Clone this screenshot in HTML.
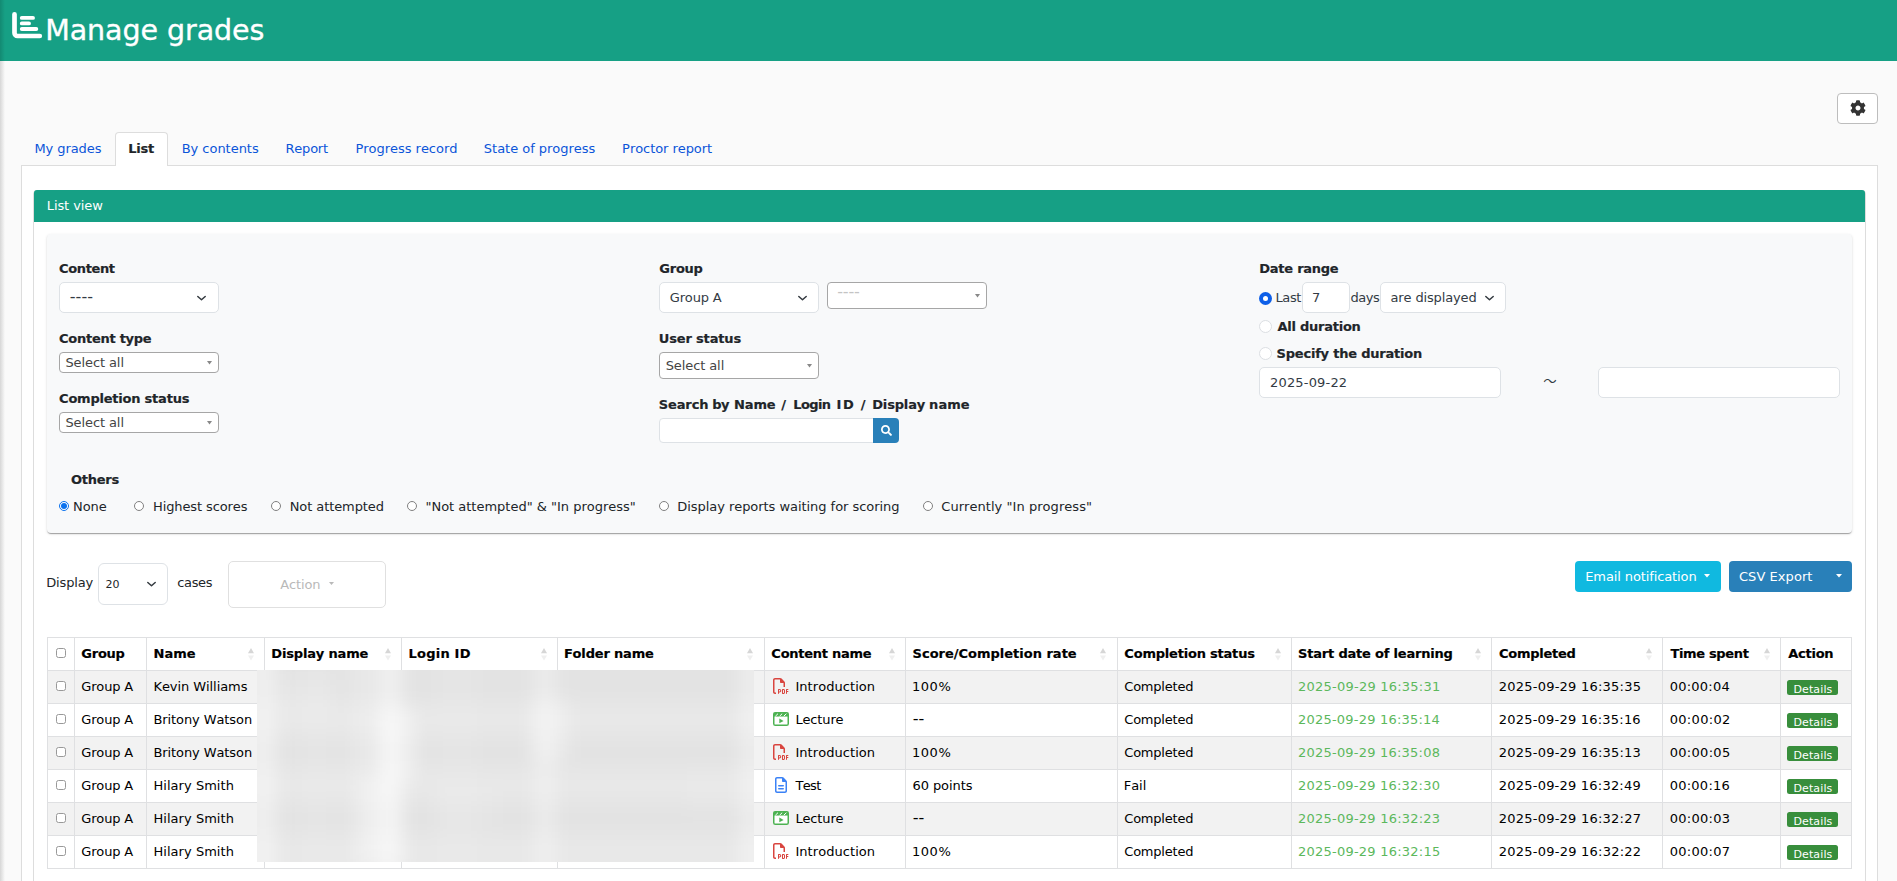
<!DOCTYPE html><html lang="en"><head><meta charset="utf-8"><title>Manage grades</title><style>
html,body{margin:0;padding:0}
body{width:1897px;height:881px;overflow:hidden;background:#fafafa;font-family:"DejaVu Sans","Liberation Sans",sans-serif;font-size:13px;color:#212529;position:relative}
.t{position:absolute;white-space:pre;line-height:normal;font-kerning:none}
.b{position:absolute;box-sizing:border-box}
svg{position:absolute;display:block;overflow:visible}
</style></head><body>
<header>
<div class="b" style="left:0px;top:0px;width:1897px;height:61px;background:#16a085;"></div>
<svg style="left:0;top:0" width="60" height="60" viewBox="0 0 60 60"><path d="M14.5 14.3V33a3 3 0 0 0 3 3H39.800" fill="none" stroke="#fff" stroke-width="4.700" stroke-linecap="round" stroke-linejoin="round"/><path d="M21.800 17.900H33M21.800 23.400H29M21.800 29H36.300" fill="none" stroke="#fff" stroke-width="3.900" stroke-linecap="round"/></svg>
<span class="t" style="left:45.2px;top:14.0px;font-size:28.5px;font-weight:400;color:#fff;letter-spacing:-0.069px;-webkit-text-stroke:0.35px #fff;">Manage grades</span>
</header>
<main>
<div class="b" style="left:1837px;top:93px;width:41px;height:31px;background:#fff;border:1px solid #bdbdbd;border-radius:4px;"></div>
<svg style="left:1849.5px;top:100px" width="16" height="16" viewBox="0 0 512 512"><path fill="#333" d="M487.4 315.7l-42.600-24.600c4.300-23.200 4.300-47 0-70.200l42.600-24.600c4.900-2.800 7.100-8.600 5.500-14-11.100-35.600-30-67.800-54.700-94.600-3.800-4.100-10-5.100-14.800-2.300L380.800 110c-17.900-15.400-38.500-27.300-60.800-35.100V25.800c0-5.600-3.900-10.500-9.400-11.700-36.700-8.200-74.300-7.800-109.200 0-5.500 1.200-9.400 6.100-9.400 11.700V75c-22.200 7.900-42.800 19.800-60.800 35.100L88.700 85.500c-4.900-2.800-11-1.900-14.800 2.300-24.700 26.700-43.600 58.900-54.700 94.600-1.700 5.400.6 11.200 5.500 14L67.300 221c-4.300 23.200-4.300 47 0 70.200l-42.600 24.600c-4.900 2.800-7.100 8.600-5.500 14 11.100 35.600 30 67.800 54.700 94.600 3.800 4.100 10 5.100 14.800 2.300l42.600-24.600c17.900 15.400 38.500 27.300 60.800 35.100v49.200c0 5.600 3.900 10.500 9.400 11.700 36.700 8.200 74.300 7.800 109.200 0 5.500-1.200 9.400-6.100 9.400-11.700v-49.200c22.200-7.900 42.800-19.800 60.800-35.100l42.600 24.600c4.900 2.800 11 1.900 14.800-2.300 24.700-26.700 43.600-58.900 54.700-94.600 1.500-5.500-.7-11.300-5.600-14.100zM256 336c-44.100 0-80-35.900-80-80s35.900-80 80-80 80 35.900 80 80-35.900 80-80 80z"/></svg>
<nav>
<div class="b" style="left:21px;top:165px;width:1857px;height:760px;background:#fff;border:1px solid #ddd;"></div>
<div class="b" style="left:115px;top:132px;width:53px;height:34px;background:#fff;border:1px solid #ddd;border-bottom:none;border-radius:4px 4px 0 0;"></div>
<span class="t" style="left:34.47px;top:141.25px;font-size:13px;font-weight:400;color:#0b55d9;letter-spacing:-0.083px;">My grades</span>
<span class="t" style="left:128.31px;top:141.25px;font-size:13px;font-weight:700;color:#212529;letter-spacing:-0.217px;-webkit-text-stroke:0.18px #212529;">List</span>
<span class="t" style="left:181.72px;top:141.25px;font-size:13px;font-weight:400;color:#0b55d9;letter-spacing:-0.033px;">By contents</span>
<span class="t" style="left:285.47px;top:141.25px;font-size:13px;font-weight:400;color:#0b55d9;letter-spacing:-0.208px;">Report</span>
<span class="t" style="left:355.47px;top:141.25px;font-size:13px;font-weight:400;color:#0b55d9;letter-spacing:-0.032px;">Progress record</span>
<span class="t" style="left:483.84px;top:141.25px;font-size:13px;font-weight:400;color:#0b55d9;letter-spacing:-0.025px;">State of progress</span>
<span class="t" style="left:622.12px;top:141.25px;font-size:13px;font-weight:400;color:#0b55d9;letter-spacing:-0.063px;">Proctor report</span>
</nav>
<section>
<div class="b" style="left:33px;top:190px;width:1833px;height:735px;border:1px solid #ddd;border-radius:4px 4px 0 0;"></div>
<div class="b" style="left:34px;top:190px;width:1831px;height:32px;background:#16a085;border-radius:3px 3px 0 0;"></div>
<span class="t" style="left:46.72px;top:198px;font-size:13px;font-weight:400;color:#fff;letter-spacing:-0.084px;">List view</span>
<form>
<div class="b" style="left:47px;top:234px;width:1805px;height:299px;background:#f8f9fa;border-radius:4px;box-shadow:0 2px 1px -1px rgba(0,0,0,.2),0 1px 1px 0 rgba(0,0,0,.14),0 1px 3px 0 rgba(0,0,0,.12);"></div>
<span class="t" style="left:59.1px;top:261px;font-size:13px;font-weight:700;color:#212529;letter-spacing:-0.372px;-webkit-text-stroke:0.18px #212529;">Content</span>
<div class="b" style="left:59px;top:282px;width:160px;height:31px;background:#fff;border:1px solid #dee2e6;border-radius:5px;"></div>
<span class="t" style="left:69.72px;top:286.5px;font-size:16px;font-weight:400;color:#333b44;letter-spacing:0.09px;">----</span>
<svg style="left:196.9px;top:295.75px" width="9" height="4.5" viewBox="0 0 9 4.5"><path d="M0.8 0.5 L4.5 3.8 L8.2 0.5" fill="none" stroke="#343a40" stroke-width="1.5" stroke-linecap="round" stroke-linejoin="round"/></svg>
<span class="t" style="left:59.1px;top:331px;font-size:13px;font-weight:700;color:#212529;letter-spacing:-0.272px;-webkit-text-stroke:0.18px #212529;">Content type</span>
<div class="b" style="left:59px;top:352px;width:160px;height:21px;background:#fff;border:1px solid #a6a6a6;border-radius:4px;"></div>
<span class="t" style="left:65.39px;top:354.75px;font-size:13px;font-weight:400;color:#444;letter-spacing:-0.089px;">Select all</span>
<svg style="left:207.0px;top:360.75px" width="5" height="3.5" viewBox="0 0 5 3.5"><path d="M0 0H5L2.5 3.5z" fill="#888"/></svg>
<span class="t" style="left:59.1px;top:391px;font-size:13px;font-weight:700;color:#212529;letter-spacing:-0.225px;-webkit-text-stroke:0.18px #212529;">Completion status</span>
<div class="b" style="left:59px;top:412px;width:160px;height:21px;background:#fff;border:1px solid #a6a6a6;border-radius:4px;"></div>
<span class="t" style="left:65.39px;top:414.75px;font-size:13px;font-weight:400;color:#444;letter-spacing:-0.089px;">Select all</span>
<svg style="left:207.0px;top:420.75px" width="5" height="3.5" viewBox="0 0 5 3.5"><path d="M0 0H5L2.5 3.5z" fill="#888"/></svg>
<span class="t" style="left:659.35px;top:261px;font-size:13px;font-weight:700;color:#212529;letter-spacing:-0.26px;-webkit-text-stroke:0.18px #212529;">Group</span>
<div class="b" style="left:659px;top:282px;width:160px;height:31px;background:#fff;border:1px solid #dee2e6;border-radius:5px;"></div>
<span class="t" style="left:669.77px;top:290px;font-size:13px;font-weight:400;color:#333b44;letter-spacing:-0.167px;">Group A</span>
<svg style="left:797.9px;top:295.75px" width="9" height="4.5" viewBox="0 0 9 4.5"><path d="M0.8 0.5 L4.5 3.8 L8.2 0.5" fill="none" stroke="#343a40" stroke-width="1.5" stroke-linecap="round" stroke-linejoin="round"/></svg>
<div class="b" style="left:827px;top:282px;width:160px;height:27px;background:#fff;border:1px solid #a6a6a6;border-radius:4px;"></div>
<span class="t" style="left:837.22px;top:281.9px;font-size:16px;font-weight:400;color:#c4c4c4;letter-spacing:-0.16px;">----</span>
<svg style="left:975.0px;top:293.75px" width="5" height="3.5" viewBox="0 0 5 3.5"><path d="M0 0H5L2.5 3.5z" fill="#888"/></svg>
<span class="t" style="left:658.81px;top:331px;font-size:13px;font-weight:700;color:#212529;letter-spacing:-0.162px;-webkit-text-stroke:0.18px #212529;">User status</span>
<div class="b" style="left:659px;top:352px;width:160px;height:27px;background:#fff;border:1px solid #a6a6a6;border-radius:4px;"></div>
<span class="t" style="left:665.64px;top:358px;font-size:13px;font-weight:400;color:#444;letter-spacing:-0.089px;">Select all</span>
<svg style="left:807.0px;top:363.75px" width="5" height="3.5" viewBox="0 0 5 3.5"><path d="M0 0H5L2.5 3.5z" fill="#888"/></svg>
<label>
<span class="t" style="left:658.77px;top:397px;font-size:13px;font-weight:700;color:#212529;letter-spacing:-0.115px;-webkit-text-stroke:0.18px #212529;">Search</span>
<span class="t" style="left:712.36px;top:397px;font-size:13px;font-weight:700;color:#212529;letter-spacing:-0.653px;-webkit-text-stroke:0.18px #212529;">by</span>
<span class="t" style="left:734.01px;top:397px;font-size:13px;font-weight:700;color:#212529;letter-spacing:-0.131px;-webkit-text-stroke:0.18px #212529;">Name</span>
<span class="t" style="left:781.3px;top:397px;font-size:13px;font-weight:700;color:#212529;-webkit-text-stroke:0.18px #212529;">/</span>
<span class="t" style="left:793.26px;top:397px;font-size:13px;font-weight:700;color:#212529;letter-spacing:-0.618px;-webkit-text-stroke:0.18px #212529;">Login</span>
<span class="t" style="left:836.51px;top:397px;font-size:13px;font-weight:700;color:#212529;letter-spacing:1.6px;-webkit-text-stroke:0.18px #212529;">ID</span>
<span class="t" style="left:860.8px;top:397px;font-size:13px;font-weight:700;color:#212529;-webkit-text-stroke:0.18px #212529;">/</span>
<span class="t" style="left:872.26px;top:397px;font-size:13px;font-weight:700;color:#212529;letter-spacing:-0.169px;-webkit-text-stroke:0.18px #212529;">Display</span>
<span class="t" style="left:929.11px;top:397px;font-size:13px;font-weight:700;color:#212529;letter-spacing:0.043px;-webkit-text-stroke:0.18px #212529;">name</span>
</label>
<div class="b" style="left:659px;top:418px;width:215px;height:25px;background:#fff;border:1px solid #dee2e6;border-radius:4px 0 0 4px;"></div>
<div class="b" style="left:873px;top:418px;width:26px;height:25px;background:#2980b9;border-radius:0 4px 4px 0;"></div>
<svg style="left:880.5px;top:425px" width="11" height="11" viewBox="0 0 512 512"><path fill="#fff" d="M505 442.7L405.300 343c-4.500-4.500-10.600-7-17-7H372c27.600-35.300 44-79.700 44-128C416 93.100 322.900 0 208 0S0 93.100 0 208s93.100 208 208 208c48.300 0 92.700-16.400 128-44v16.300c0 6.400 2.500 12.500 7 17l99.700 99.700c9.400 9.400 24.600 9.400 33.900 0l28.300-28.300c9.400-9.400 9.400-24.600.1-34zM208 336c-70.700 0-128-57.200-128-128 0-70.700 57.200-128 128-128 70.700 0 128 57.200 128 128 0 70.700-57.200 128-128 128z"/></svg>
<span class="t" style="left:1259.31px;top:261px;font-size:13px;font-weight:700;color:#212529;letter-spacing:-0.257px;-webkit-text-stroke:0.18px #212529;">Date range</span>
<div class="b" style="left:1259.0px;top:292.0px;width:13px;height:13px;border-radius:50%;background:#0d5fe8;"></div>
<div class="b" style="left:1263.0px;top:296.0px;width:5px;height:5px;border-radius:50%;background:#fff;"></div>
<span class="t" style="left:1275.47px;top:290px;font-size:13px;font-weight:400;color:#333b44;letter-spacing:-0.397px;">Last</span>
<div class="b" style="left:1302px;top:282px;width:48px;height:31px;background:#fff;border:1px solid #dee2e6;border-radius:5px;"></div>
<span class="t" style="left:1311.93px;top:290px;font-size:13px;font-weight:400;color:#333b44;letter-spacing:0px;">7</span>
<span class="t" style="left:1350.53px;top:290px;font-size:13px;font-weight:400;color:#333b44;letter-spacing:-0.511px;">days</span>
<div class="b" style="left:1380px;top:282px;width:126px;height:31px;background:#fff;border:1px solid #dee2e6;border-radius:5px;"></div>
<span class="t" style="left:1390.47px;top:290px;font-size:13px;font-weight:400;color:#333b44;letter-spacing:-0.133px;">are displayed</span>
<svg style="left:1485.0px;top:295.75px" width="9" height="4.5" viewBox="0 0 9 4.5"><path d="M0.8 0.5 L4.5 3.8 L8.2 0.5" fill="none" stroke="#343a40" stroke-width="1.5" stroke-linecap="round" stroke-linejoin="round"/></svg>
<div class="b" style="left:1259.0px;top:320.0px;width:13px;height:13px;border-radius:50%;background:#fff;border:1px solid #dcdfe3;"></div>
<span class="t" style="left:1277.44px;top:319.25px;font-size:13px;font-weight:700;color:#212529;letter-spacing:-0.247px;-webkit-text-stroke:0.18px #212529;">All duration</span>
<div class="b" style="left:1259.0px;top:347.0px;width:13px;height:13px;border-radius:50%;background:#fff;border:1px solid #dcdfe3;"></div>
<span class="t" style="left:1276.57px;top:346.25px;font-size:13px;font-weight:700;color:#212529;letter-spacing:-0.209px;-webkit-text-stroke:0.18px #212529;">Specify the duration</span>
<div class="b" style="left:1259px;top:367px;width:242px;height:31px;background:#fff;border:1px solid #dee2e6;border-radius:5px;"></div>
<span class="t" style="left:1270.05px;top:375px;font-size:13px;font-weight:400;color:#333b44;letter-spacing:0.167px;">2025-09-22</span>
<span class="t" style="left:1543.2px;top:369.5px;font-size:13.5px;font-weight:400;color:#333b44;font-family:'Noto Sans CJK JP','DejaVu Sans',sans-serif;">～</span>
<div class="b" style="left:1598px;top:367px;width:242px;height:31px;background:#fff;border:1px solid #dee2e6;border-radius:5px;"></div>
<span class="t" style="left:71.1px;top:472.25px;font-size:13px;font-weight:700;color:#212529;letter-spacing:-0.285px;-webkit-text-stroke:0.18px #212529;">Others</span>
<div class="b" style="left:58.75px;top:500.8px;width:10px;height:10px;border-radius:50%;background:#fff;border:1.1px solid #0b72ee;"></div>
<div class="b" style="left:60.75px;top:502.8px;width:6px;height:6px;border-radius:50%;background:#0b72ee;"></div>
<span class="t" style="left:72.97px;top:499.25px;font-size:13px;font-weight:400;color:#212529;letter-spacing:-0.049px;">None</span>
<div class="b" style="left:134.25px;top:500.8px;width:10px;height:10px;border-radius:50%;background:#fff;border:1px solid #808080;"></div>
<span class="t" style="left:152.97px;top:499.25px;font-size:13px;font-weight:400;color:#212529;letter-spacing:-0.108px;">Highest scores</span>
<div class="b" style="left:270.75px;top:500.8px;width:10px;height:10px;border-radius:50%;background:#fff;border:1px solid #808080;"></div>
<span class="t" style="left:289.72px;top:499.25px;font-size:13px;font-weight:400;color:#212529;letter-spacing:-0.089px;">Not attempted</span>
<div class="b" style="left:407px;top:500.8px;width:10px;height:10px;border-radius:50%;background:#fff;border:1px solid #808080;"></div>
<span class="t" style="left:425.45px;top:499.25px;font-size:13px;font-weight:400;color:#212529;letter-spacing:-0.008px;">&quot;Not attempted&quot; &amp; &quot;In progress&quot;</span>
<div class="b" style="left:658.8px;top:500.8px;width:10px;height:10px;border-radius:50%;background:#fff;border:1px solid #808080;"></div>
<span class="t" style="left:677.22px;top:499.25px;font-size:13px;font-weight:400;color:#212529;letter-spacing:-0.046px;">Display reports waiting for scoring</span>
<div class="b" style="left:922.7px;top:500.8px;width:10px;height:10px;border-radius:50%;background:#fff;border:1px solid #808080;"></div>
<span class="t" style="left:941.27px;top:499.25px;font-size:13px;font-weight:400;color:#212529;letter-spacing:0.048px;">Currently &quot;In progress&quot;</span>
</form>
<div>
<span class="t" style="left:46.22px;top:574.75px;font-size:13px;font-weight:400;color:#212529;letter-spacing:-0.159px;">Display</span>
<div class="b" style="left:98px;top:563px;width:70px;height:42px;background:#fff;border:1px solid #dee2e6;border-radius:6px;"></div>
<span class="t" style="left:105.44px;top:578px;font-size:11px;font-weight:400;color:#212529;letter-spacing:0.089px;">20</span>
<svg style="left:147.0px;top:581.75px" width="9" height="4.5" viewBox="0 0 9 4.5"><path d="M0.8 0.5 L4.5 3.8 L8.2 0.5" fill="none" stroke="#343a40" stroke-width="1.5" stroke-linecap="round" stroke-linejoin="round"/></svg>
<span class="t" style="left:177.28px;top:574.75px;font-size:13px;font-weight:400;color:#212529;letter-spacing:-0.376px;">cases</span>
<div class="b" style="left:228px;top:561px;width:158px;height:47px;background:#fff;border:1px solid #e0e0e0;border-radius:5px;"></div>
<span class="t" style="left:280.2px;top:577px;font-size:13px;font-weight:400;color:#b9b9b9;letter-spacing:-0.127px;">Action</span>
<svg style="left:328.5px;top:581.8px" width="5" height="3" viewBox="0 0 5 3"><path d="M0 0H5L2.5 3z" fill="#b9b9b9"/></svg>
<div class="b" style="left:1575px;top:561px;width:146px;height:31px;background:#10b9e0;border-radius:4px;"></div>
<span class="t" style="left:1585.22px;top:569.2px;font-size:13px;font-weight:400;color:#fff;letter-spacing:-0.107px;">Email notification</span>
<svg style="left:1704.0px;top:573.75px" width="6" height="3.5" viewBox="0 0 6 3.5"><path d="M0 0H6L3.0 3.5z" fill="#fff"/></svg>
<div class="b" style="left:1729px;top:561px;width:123px;height:31px;background:#2980b9;border-radius:4px;"></div>
<span class="t" style="left:1738.97px;top:569.2px;font-size:13px;font-weight:400;color:#fff;letter-spacing:0.059px;">CSV Export</span>
<svg style="left:1836.0px;top:573.75px" width="6" height="3.5" viewBox="0 0 6 3.5"><path d="M0 0H6L3.0 3.5z" fill="#fff"/></svg>
</div>
<div>
<div class="b" style="left:47px;top:670px;width:1805px;height:33px;background:#f2f2f2;"></div>
<div class="b" style="left:47px;top:703px;width:1805px;height:33px;background:#fff;"></div>
<div class="b" style="left:47px;top:736px;width:1805px;height:33px;background:#f2f2f2;"></div>
<div class="b" style="left:47px;top:769px;width:1805px;height:33px;background:#fff;"></div>
<div class="b" style="left:47px;top:802px;width:1805px;height:33px;background:#f2f2f2;"></div>
<div class="b" style="left:47px;top:835px;width:1805px;height:33px;background:#fff;"></div>
<div class="b" style="left:47px;top:637px;width:1805px;height:1px;background:#dfe0e2;"></div>
<div class="b" style="left:47px;top:670px;width:1805px;height:1px;background:#dfe0e2;"></div>
<div class="b" style="left:47px;top:703px;width:1805px;height:1px;background:#dfe0e2;"></div>
<div class="b" style="left:47px;top:736px;width:1805px;height:1px;background:#dfe0e2;"></div>
<div class="b" style="left:47px;top:769px;width:1805px;height:1px;background:#dfe0e2;"></div>
<div class="b" style="left:47px;top:802px;width:1805px;height:1px;background:#dfe0e2;"></div>
<div class="b" style="left:47px;top:835px;width:1805px;height:1px;background:#dfe0e2;"></div>
<div class="b" style="left:47px;top:868px;width:1805px;height:1px;background:#dfe0e2;"></div>
<div class="b" style="left:47px;top:637px;width:1px;height:232px;background:#dfe0e2;"></div>
<div class="b" style="left:74px;top:637px;width:1px;height:232px;background:#dfe0e2;"></div>
<div class="b" style="left:146px;top:637px;width:1px;height:232px;background:#dfe0e2;"></div>
<div class="b" style="left:264px;top:637px;width:1px;height:232px;background:#dfe0e2;"></div>
<div class="b" style="left:401px;top:637px;width:1px;height:232px;background:#dfe0e2;"></div>
<div class="b" style="left:557px;top:637px;width:1px;height:232px;background:#dfe0e2;"></div>
<div class="b" style="left:764px;top:637px;width:1px;height:232px;background:#dfe0e2;"></div>
<div class="b" style="left:905px;top:637px;width:1px;height:232px;background:#dfe0e2;"></div>
<div class="b" style="left:1117px;top:637px;width:1px;height:232px;background:#dfe0e2;"></div>
<div class="b" style="left:1291px;top:637px;width:1px;height:232px;background:#dfe0e2;"></div>
<div class="b" style="left:1491px;top:637px;width:1px;height:232px;background:#dfe0e2;"></div>
<div class="b" style="left:1662px;top:637px;width:1px;height:232px;background:#dfe0e2;"></div>
<div class="b" style="left:1780px;top:637px;width:1px;height:232px;background:#dfe0e2;"></div>
<div class="b" style="left:1851px;top:637px;width:1px;height:232px;background:#dfe0e2;"></div>
<div class="b" style="left:55.75px;top:648px;width:10px;height:10px;background:#fff;border:1px solid #999;border-radius:2.5px;"></div>
<span class="t" style="left:81.35px;top:646px;font-size:13px;font-weight:700;color:#000;letter-spacing:-0.26px;-webkit-text-stroke:0.18px #000;">Group</span>
<span class="t" style="left:153.56px;top:646px;font-size:13px;font-weight:700;color:#000;letter-spacing:0.036px;-webkit-text-stroke:0.18px #000;">Name</span>
<svg style="left:247.75px;top:648px" width="6" height="12.6" viewBox="0 0 6 12.6"><path d="M3 0L6 5.200H0z" fill="#d6d6d6"/><path d="M3 12.600L6 7.400H0z" fill="#efefef"/></svg>
<span class="t" style="left:271.31px;top:646px;font-size:13px;font-weight:700;color:#000;letter-spacing:-0.162px;-webkit-text-stroke:0.18px #000;">Display name</span>
<svg style="left:385px;top:648px" width="6" height="12.6" viewBox="0 0 6 12.6"><path d="M3 0L6 5.200H0z" fill="#d6d6d6"/><path d="M3 12.600L6 7.400H0z" fill="#efefef"/></svg>
<span class="t" style="left:408.56px;top:646px;font-size:13px;font-weight:700;color:#000;letter-spacing:0.22px;-webkit-text-stroke:0.18px #000;">Login ID</span>
<svg style="left:541px;top:648px" width="6" height="12.6" viewBox="0 0 6 12.6"><path d="M3 0L6 5.200H0z" fill="#d6d6d6"/><path d="M3 12.600L6 7.400H0z" fill="#efefef"/></svg>
<span class="t" style="left:563.91px;top:646px;font-size:13px;font-weight:700;color:#000;letter-spacing:-0.18px;-webkit-text-stroke:0.18px #000;">Folder name</span>
<svg style="left:747.25px;top:648px" width="6" height="12.6" viewBox="0 0 6 12.6"><path d="M3 0L6 5.200H0z" fill="#d6d6d6"/><path d="M3 12.600L6 7.400H0z" fill="#efefef"/></svg>
<span class="t" style="left:771.35px;top:646px;font-size:13px;font-weight:700;color:#000;letter-spacing:-0.256px;-webkit-text-stroke:0.18px #000;">Content name</span>
<svg style="left:889px;top:648px" width="6" height="12.6" viewBox="0 0 6 12.6"><path d="M3 0L6 5.200H0z" fill="#d6d6d6"/><path d="M3 12.600L6 7.400H0z" fill="#efefef"/></svg>
<span class="t" style="left:912.57px;top:646px;font-size:13px;font-weight:700;color:#000;letter-spacing:-0.003px;-webkit-text-stroke:0.18px #000;">Score/Completion rate</span>
<svg style="left:1100px;top:648px" width="6" height="12.6" viewBox="0 0 6 12.6"><path d="M3 0L6 5.200H0z" fill="#d6d6d6"/><path d="M3 12.600L6 7.400H0z" fill="#efefef"/></svg>
<span class="t" style="left:1124.35px;top:646px;font-size:13px;font-weight:700;color:#000;letter-spacing:-0.209px;-webkit-text-stroke:0.18px #000;">Completion status</span>
<svg style="left:1274.5px;top:648px" width="6" height="12.6" viewBox="0 0 6 12.6"><path d="M3 0L6 5.200H0z" fill="#d6d6d6"/><path d="M3 12.600L6 7.400H0z" fill="#efefef"/></svg>
<span class="t" style="left:1298.07px;top:646px;font-size:13px;font-weight:700;color:#000;letter-spacing:-0.198px;-webkit-text-stroke:0.18px #000;">Start date of learning</span>
<svg style="left:1475px;top:648px" width="6" height="12.6" viewBox="0 0 6 12.6"><path d="M3 0L6 5.200H0z" fill="#d6d6d6"/><path d="M3 12.600L6 7.400H0z" fill="#efefef"/></svg>
<span class="t" style="left:1499.1px;top:646px;font-size:13px;font-weight:700;color:#000;letter-spacing:-0.268px;-webkit-text-stroke:0.18px #000;">Completed</span>
<svg style="left:1646px;top:648px" width="6" height="12.6" viewBox="0 0 6 12.6"><path d="M3 0L6 5.200H0z" fill="#d6d6d6"/><path d="M3 12.600L6 7.400H0z" fill="#efefef"/></svg>
<span class="t" style="left:1670.44px;top:646px;font-size:13px;font-weight:700;color:#000;letter-spacing:-0.348px;-webkit-text-stroke:0.18px #000;">Time spent</span>
<svg style="left:1764px;top:648px" width="6" height="12.6" viewBox="0 0 6 12.6"><path d="M3 0L6 5.200H0z" fill="#d6d6d6"/><path d="M3 12.600L6 7.400H0z" fill="#efefef"/></svg>
<span class="t" style="left:1788.24px;top:646px;font-size:13px;font-weight:700;color:#000;letter-spacing:-0.249px;-webkit-text-stroke:0.18px #000;">Action</span>
<div class="b" style="left:55.75px;top:681px;width:10px;height:10px;background:#fff;border:1px solid #999;border-radius:2.5px;"></div>
<span class="t" style="left:81.27px;top:679px;font-size:13px;font-weight:400;color:#000;letter-spacing:-0.167px;">Group A</span>
<span class="t" style="left:153.47px;top:679px;font-size:13px;font-weight:400;color:#000;letter-spacing:-0.073px;">Kevin Williams</span>
<svg style="left:772.75px;top:678px" width="16" height="16" viewBox="0 0 512 512"><path fill="#d9453f" d="M64 464H96v48H64c-35.300 0-64-28.700-64-64V64C0 28.700 28.700 0 64 0H229.500c17 0 33.300 6.700 45.300 18.700l90.500 90.500c12 12 18.700 28.300 18.700 45.300V288H336V160H256c-17.700 0-32-14.300-32-32V48H64c-8.800 0-16 7.200-16 16V448c0 8.800 7.200 16 16 16zM176 352h32c30.900 0 56 25.100 56 56s-25.100 56-56 56H192v32c0 8.800-7.200 16-16 16s-16-7.200-16-16V448 368c0-8.800 7.200-16 16-16zm32 80c13.300 0 24-10.700 24-24s-10.700-24-24-24H192v48h16zm96-80h32c26.500 0 48 21.500 48 48v64c0 26.500-21.500 48-48 48H304c-8.800 0-16-7.200-16-16V368c0-8.800 7.200-16 16-16zm32 128c8.800 0 16-7.200 16-16V400c0-8.800-7.200-16-16-16H320v96h16zm80-112c0-8.800 7.200-16 16-16h48c8.800 0 16 7.200 16 16s-7.200 16-16 16H448v32h32c8.800 0 16 7.200 16 16s-7.200 16-16 16H448v48c0 8.800-7.200 16-16 16s-16-7.200-16-16V432 368z"/></svg>
<span class="t" style="left:795.42px;top:679px;font-size:13px;font-weight:400;color:#000;letter-spacing:0.061px;">Introduction</span>
<span class="t" style="left:912.07px;top:679px;font-size:13px;font-weight:400;color:#000;letter-spacing:0.51px;">100%</span>
<span class="t" style="left:1124.27px;top:679px;font-size:13px;font-weight:400;color:#000;letter-spacing:-0.212px;">Completed</span>
<span class="t" style="left:1298.05px;top:679px;font-size:13px;font-weight:400;color:#5cb85c;letter-spacing:0.23px;">2025-09-29 16:35:31</span>
<span class="t" style="left:1498.8px;top:679px;font-size:13px;font-weight:400;color:#000;letter-spacing:0.226px;">2025-09-29 16:35:35</span>
<span class="t" style="left:1669.64px;top:679px;font-size:13px;font-weight:400;color:#000;letter-spacing:0.25px;">00:00:04</span>
<div class="b" style="left:1787px;top:680px;width:51px;height:15px;background:#388e3c;border-radius:2.5px;"></div>
<span class="t" style="left:1793.42px;top:682.5px;font-size:11px;font-weight:400;color:#fff;letter-spacing:0.13px;">Details</span>
<div class="b" style="left:55.75px;top:714px;width:10px;height:10px;background:#fff;border:1px solid #999;border-radius:2.5px;"></div>
<span class="t" style="left:81.27px;top:712px;font-size:13px;font-weight:400;color:#000;letter-spacing:-0.167px;">Group A</span>
<span class="t" style="left:153.47px;top:712px;font-size:13px;font-weight:400;color:#000;letter-spacing:-0.092px;">Britony Watson</span>
<svg style="left:772.75px;top:712px" width="16" height="14" viewBox="0 0 16 14"><rect x="0.75" y="0.75" width="14.5" height="12.5" rx="1.6" fill="#fff" stroke="#4db252" stroke-width="1.5"/><rect x="0.75" y="0.75" width="14.500" height="3.800" fill="#4db252"/><path d="M2.400 4.200L5 1.700M6.600 4.200L9.200 1.700M10.800 4.200L13.400 1.700" stroke="#fff" stroke-width="1"/><path d="M6.300 6.600L10.600 8.900L6.300 11.200z" fill="#4db252"/></svg>
<span class="t" style="left:795.42px;top:712px;font-size:13px;font-weight:400;color:#000;letter-spacing:-0.15px;">Lecture</span>
<span class="t" style="left:912.72px;top:708.6px;font-size:16px;font-weight:400;color:#000;letter-spacing:0.066px;">--</span>
<span class="t" style="left:1124.27px;top:712px;font-size:13px;font-weight:400;color:#000;letter-spacing:-0.212px;">Completed</span>
<span class="t" style="left:1298.05px;top:712px;font-size:13px;font-weight:400;color:#5cb85c;letter-spacing:0.204px;">2025-09-29 16:35:14</span>
<span class="t" style="left:1498.8px;top:712px;font-size:13px;font-weight:400;color:#000;letter-spacing:0.209px;">2025-09-29 16:35:16</span>
<span class="t" style="left:1669.64px;top:712px;font-size:13px;font-weight:400;color:#000;letter-spacing:0.332px;">00:00:02</span>
<div class="b" style="left:1787px;top:713px;width:51px;height:15px;background:#388e3c;border-radius:2.5px;"></div>
<span class="t" style="left:1793.42px;top:715.5px;font-size:11px;font-weight:400;color:#fff;letter-spacing:0.13px;">Details</span>
<div class="b" style="left:55.75px;top:747px;width:10px;height:10px;background:#fff;border:1px solid #999;border-radius:2.5px;"></div>
<span class="t" style="left:81.27px;top:745px;font-size:13px;font-weight:400;color:#000;letter-spacing:-0.167px;">Group A</span>
<span class="t" style="left:153.47px;top:745px;font-size:13px;font-weight:400;color:#000;letter-spacing:-0.092px;">Britony Watson</span>
<svg style="left:772.75px;top:744px" width="16" height="16" viewBox="0 0 512 512"><path fill="#d9453f" d="M64 464H96v48H64c-35.300 0-64-28.700-64-64V64C0 28.700 28.700 0 64 0H229.500c17 0 33.300 6.700 45.300 18.700l90.500 90.500c12 12 18.700 28.300 18.700 45.300V288H336V160H256c-17.700 0-32-14.300-32-32V48H64c-8.800 0-16 7.200-16 16V448c0 8.800 7.200 16 16 16zM176 352h32c30.900 0 56 25.100 56 56s-25.100 56-56 56H192v32c0 8.800-7.200 16-16 16s-16-7.200-16-16V448 368c0-8.800 7.200-16 16-16zm32 80c13.300 0 24-10.700 24-24s-10.700-24-24-24H192v48h16zm96-80h32c26.500 0 48 21.500 48 48v64c0 26.500-21.500 48-48 48H304c-8.800 0-16-7.200-16-16V368c0-8.800 7.200-16 16-16zm32 128c8.800 0 16-7.200 16-16V400c0-8.800-7.200-16-16-16H320v96h16zm80-112c0-8.800 7.200-16 16-16h48c8.800 0 16 7.200 16 16s-7.200 16-16 16H448v32h32c8.800 0 16 7.200 16 16s-7.200 16-16 16H448v48c0 8.800-7.200 16-16 16s-16-7.200-16-16V432 368z"/></svg>
<span class="t" style="left:795.42px;top:745px;font-size:13px;font-weight:400;color:#000;letter-spacing:0.061px;">Introduction</span>
<span class="t" style="left:912.07px;top:745px;font-size:13px;font-weight:400;color:#000;letter-spacing:0.51px;">100%</span>
<span class="t" style="left:1124.27px;top:745px;font-size:13px;font-weight:400;color:#000;letter-spacing:-0.212px;">Completed</span>
<span class="t" style="left:1298.05px;top:745px;font-size:13px;font-weight:400;color:#5cb85c;letter-spacing:0.212px;">2025-09-29 16:35:08</span>
<span class="t" style="left:1498.8px;top:745px;font-size:13px;font-weight:400;color:#000;letter-spacing:0.221px;">2025-09-29 16:35:13</span>
<span class="t" style="left:1669.64px;top:745px;font-size:13px;font-weight:400;color:#000;letter-spacing:0.308px;">00:00:05</span>
<div class="b" style="left:1787px;top:746px;width:51px;height:15px;background:#388e3c;border-radius:2.5px;"></div>
<span class="t" style="left:1793.42px;top:748.5px;font-size:11px;font-weight:400;color:#fff;letter-spacing:0.13px;">Details</span>
<div class="b" style="left:55.75px;top:780px;width:10px;height:10px;background:#fff;border:1px solid #999;border-radius:2.5px;"></div>
<span class="t" style="left:81.27px;top:778px;font-size:13px;font-weight:400;color:#000;letter-spacing:-0.167px;">Group A</span>
<span class="t" style="left:153.47px;top:778px;font-size:13px;font-weight:400;color:#000;letter-spacing:0.039px;">Hilary Smith</span>
<svg style="left:775px;top:776.5px" width="12" height="16" viewBox="0 0 384 512"><path fill="#3b82f6" d="M64 464c-8.800 0-16-7.200-16-16V64c0-8.800 7.200-16 16-16H224v80c0 17.700 14.300 32 32 32h80V448c0 8.800-7.200 16-16 16H64zM64 0C28.700 0 0 28.700 0 64V448c0 35.300 28.700 64 64 64H320c35.300 0 64-28.700 64-64V154.500c0-17-6.700-33.300-18.700-45.300L274.700 18.700C262.700 6.700 246.500 0 229.500 0H64zm56 256c-13.300 0-24 10.700-24 24s10.700 24 24 24H264c13.300 0 24-10.700 24-24s-10.700-24-24-24H120zm0 96c-13.300 0-24 10.700-24 24s10.700 24 24 24H264c13.300 0 24-10.700 24-24s-10.700-24-24-24H120z"/></svg>
<span class="t" style="left:795.54px;top:778px;font-size:13px;font-weight:400;color:#000;letter-spacing:-0.7px;">Test</span>
<span class="t" style="left:912.59px;top:778px;font-size:13px;font-weight:400;color:#000;letter-spacing:-0.095px;">60 points</span>
<span class="t" style="left:1123.72px;top:778px;font-size:13px;font-weight:400;color:#000;letter-spacing:-0.041px;">Fail</span>
<span class="t" style="left:1298.05px;top:778px;font-size:13px;font-weight:400;color:#5cb85c;letter-spacing:0.211px;">2025-09-29 16:32:30</span>
<span class="t" style="left:1498.8px;top:778px;font-size:13px;font-weight:400;color:#000;letter-spacing:0.214px;">2025-09-29 16:32:49</span>
<span class="t" style="left:1669.64px;top:778px;font-size:13px;font-weight:400;color:#000;letter-spacing:0.263px;">00:00:16</span>
<div class="b" style="left:1787px;top:779px;width:51px;height:15px;background:#388e3c;border-radius:2.5px;"></div>
<span class="t" style="left:1793.42px;top:781.5px;font-size:11px;font-weight:400;color:#fff;letter-spacing:0.13px;">Details</span>
<div class="b" style="left:55.75px;top:813px;width:10px;height:10px;background:#fff;border:1px solid #999;border-radius:2.5px;"></div>
<span class="t" style="left:81.27px;top:811px;font-size:13px;font-weight:400;color:#000;letter-spacing:-0.167px;">Group A</span>
<span class="t" style="left:153.47px;top:811px;font-size:13px;font-weight:400;color:#000;letter-spacing:0.039px;">Hilary Smith</span>
<svg style="left:772.75px;top:811px" width="16" height="14" viewBox="0 0 16 14"><rect x="0.75" y="0.75" width="14.5" height="12.5" rx="1.6" fill="#fff" stroke="#4db252" stroke-width="1.5"/><rect x="0.75" y="0.75" width="14.500" height="3.800" fill="#4db252"/><path d="M2.400 4.200L5 1.700M6.600 4.200L9.200 1.700M10.800 4.200L13.400 1.700" stroke="#fff" stroke-width="1"/><path d="M6.300 6.600L10.600 8.900L6.300 11.200z" fill="#4db252"/></svg>
<span class="t" style="left:795.42px;top:811px;font-size:13px;font-weight:400;color:#000;letter-spacing:-0.15px;">Lecture</span>
<span class="t" style="left:912.72px;top:807.6px;font-size:16px;font-weight:400;color:#000;letter-spacing:0.066px;">--</span>
<span class="t" style="left:1124.27px;top:811px;font-size:13px;font-weight:400;color:#000;letter-spacing:-0.212px;">Completed</span>
<span class="t" style="left:1298.05px;top:811px;font-size:13px;font-weight:400;color:#5cb85c;letter-spacing:0.221px;">2025-09-29 16:32:23</span>
<span class="t" style="left:1498.8px;top:811px;font-size:13px;font-weight:400;color:#000;letter-spacing:0.225px;">2025-09-29 16:32:27</span>
<span class="t" style="left:1669.64px;top:811px;font-size:13px;font-weight:400;color:#000;letter-spacing:0.295px;">00:00:03</span>
<div class="b" style="left:1787px;top:812px;width:51px;height:15px;background:#388e3c;border-radius:2.5px;"></div>
<span class="t" style="left:1793.42px;top:814.5px;font-size:11px;font-weight:400;color:#fff;letter-spacing:0.13px;">Details</span>
<div class="b" style="left:55.75px;top:846px;width:10px;height:10px;background:#fff;border:1px solid #999;border-radius:2.5px;"></div>
<span class="t" style="left:81.27px;top:844px;font-size:13px;font-weight:400;color:#000;letter-spacing:-0.167px;">Group A</span>
<span class="t" style="left:153.47px;top:844px;font-size:13px;font-weight:400;color:#000;letter-spacing:0.039px;">Hilary Smith</span>
<svg style="left:772.75px;top:843px" width="16" height="16" viewBox="0 0 512 512"><path fill="#d9453f" d="M64 464H96v48H64c-35.300 0-64-28.700-64-64V64C0 28.700 28.700 0 64 0H229.500c17 0 33.300 6.700 45.300 18.700l90.500 90.500c12 12 18.700 28.300 18.700 45.300V288H336V160H256c-17.700 0-32-14.300-32-32V48H64c-8.800 0-16 7.200-16 16V448c0 8.800 7.200 16 16 16zM176 352h32c30.900 0 56 25.100 56 56s-25.100 56-56 56H192v32c0 8.800-7.200 16-16 16s-16-7.200-16-16V448 368c0-8.800 7.200-16 16-16zm32 80c13.300 0 24-10.700 24-24s-10.700-24-24-24H192v48h16zm96-80h32c26.500 0 48 21.500 48 48v64c0 26.500-21.500 48-48 48H304c-8.800 0-16-7.200-16-16V368c0-8.800 7.200-16 16-16zm32 128c8.800 0 16-7.200 16-16V400c0-8.800-7.200-16-16-16H320v96h16zm80-112c0-8.800 7.200-16 16-16h48c8.800 0 16 7.200 16 16s-7.200 16-16 16H448v32h32c8.800 0 16 7.200 16 16s-7.200 16-16 16H448v48c0 8.800-7.200 16-16 16s-16-7.200-16-16V432 368z"/></svg>
<span class="t" style="left:795.42px;top:844px;font-size:13px;font-weight:400;color:#000;letter-spacing:0.061px;">Introduction</span>
<span class="t" style="left:912.07px;top:844px;font-size:13px;font-weight:400;color:#000;letter-spacing:0.51px;">100%</span>
<span class="t" style="left:1124.27px;top:844px;font-size:13px;font-weight:400;color:#000;letter-spacing:-0.212px;">Completed</span>
<span class="t" style="left:1298.05px;top:844px;font-size:13px;font-weight:400;color:#5cb85c;letter-spacing:0.226px;">2025-09-29 16:32:15</span>
<span class="t" style="left:1498.8px;top:844px;font-size:13px;font-weight:400;color:#000;letter-spacing:0.235px;">2025-09-29 16:32:22</span>
<span class="t" style="left:1669.64px;top:844px;font-size:13px;font-weight:400;color:#000;letter-spacing:0.305px;">00:00:07</span>
<div class="b" style="left:1787px;top:845px;width:51px;height:15px;background:#388e3c;border-radius:2.5px;"></div>
<span class="t" style="left:1793.42px;top:847.5px;font-size:11px;font-weight:400;color:#fff;letter-spacing:0.13px;">Details</span>
<div class="b" style="left:257px;top:670px;width:497px;height:192px;overflow:hidden;background:#e4e4e4"><div class="b" style="left:-30px;top:-30px;width:560px;height:260px;filter:blur(9px);background:#e3e3e3"><div class="b" style="left:0;top:63px;width:560px;height:33px;background:rgba(255,255,255,.2)"></div><div class="b" style="left:0;top:129px;width:560px;height:33px;background:rgba(255,255,255,.2)"></div><div class="b" style="left:0;top:195px;width:560px;height:40px;background:rgba(255,255,255,.2)"></div><div class="b" style="left:24.0px;top:0;width:24px;height:260px;background:rgba(255,255,255,0.45)"></div><div class="b" style="left:154.0px;top:0;width:20px;height:260px;background:rgba(255,255,255,0.5)"></div><div class="b" style="left:123.0px;top:0;width:30px;height:260px;background:rgba(255,255,255,0.18)"></div><div class="b" style="left:308.0px;top:0;width:20px;height:260px;background:rgba(255,255,255,0.32)"></div><div class="b" style="left:514.0px;top:0;width:20px;height:260px;background:rgba(255,255,255,0.4)"></div><div class="b" style="left:75.0px;top:0;width:30px;height:260px;background:rgba(255,255,255,0.08)"></div><div class="b" style="left:210.0px;top:0;width:40px;height:260px;background:rgba(255,255,255,0.08)"></div><div class="b" style="left:150px;top:70px;width:40px;height:70px;background:rgba(255,255,255,0.35)"></div><div class="b" style="left:135px;top:140px;width:40px;height:82px;background:rgba(255,255,255,0.3)"></div><div class="b" style="left:305px;top:60px;width:36px;height:60px;background:rgba(255,255,255,0.25)"></div><div class="b" style="left:50px;top:40px;width:60px;height:40px;background:rgba(255,255,255,0.12)"></div><div class="b" style="left:460px;top:130px;width:50px;height:40px;background:rgba(255,255,255,0.08)"></div><div class="b" style="left:210px;top:150px;width:60px;height:40px;background:rgba(255,255,255,0.1)"></div></div></div>
</div>
</section>
</main>
<div class="b" style="left:0px;top:0px;width:5px;height:881px;background:linear-gradient(to right,rgba(0,0,0,.14),rgba(0,0,0,0));"></div>
</body></html>
